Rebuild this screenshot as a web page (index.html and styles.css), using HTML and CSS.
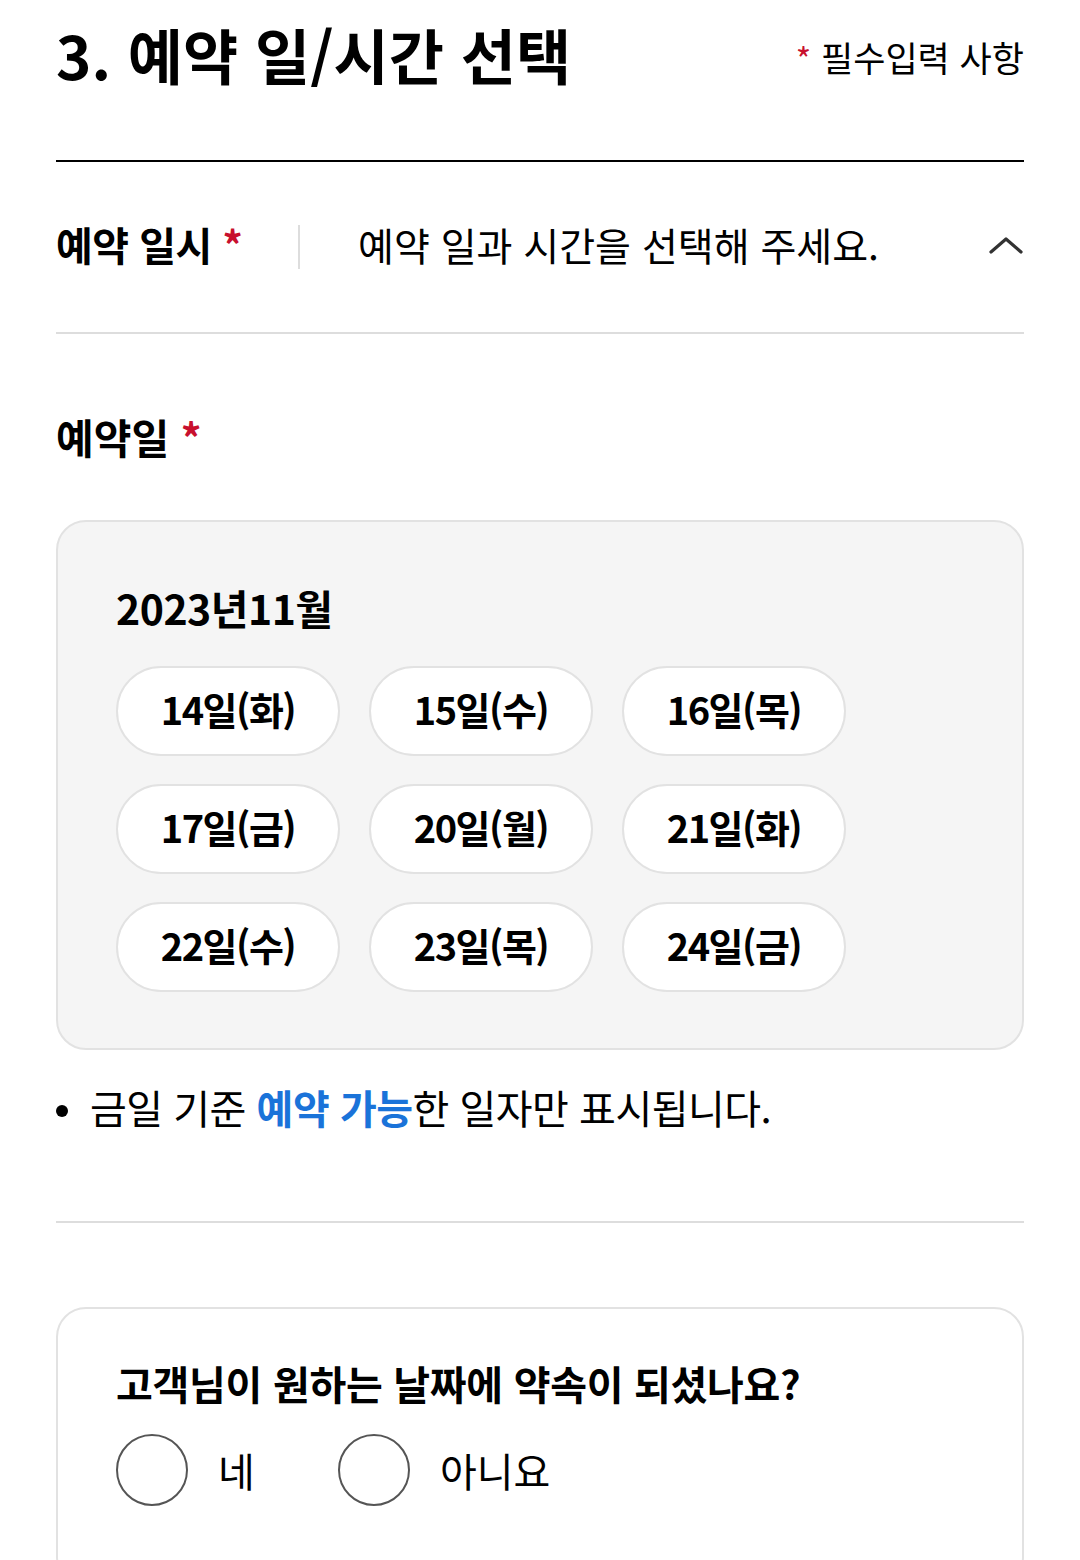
FILE: index.html
```html
<!DOCTYPE html>
<html lang="ko">

<head>
    <meta charset="UTF-8">
    <meta name="viewport" content="width=device-width, initial-scale=1.0">
    <title>예약 일/시간 선택</title>
    <link rel="stylesheet" href="styles.css">
</head>

<body>
    <div class="wrap">
        <div class="head">
            <h2 class="title">3. 예약 일/시간 선택</h2>
            <p class="must"><span class="star">*</span> 필수입력 사항</p>
        </div>

        <div class="pick">
            <div class="pick_label">예약 일시 <span class="star">*</span></div>
            <div class="pick_line"></div>
            <div class="pick_text">예약 일과 시간을 선택해 주세요.</div>
            <svg class="arrow" width="36" height="20" viewBox="0 0 36 20">
                <path d="M3 17 L18 4 L33 17" fill="none" stroke="#333" stroke-width="3.2" stroke-linecap="round" stroke-linejoin="round" />
            </svg>
        </div>

        <div class="sub_tit">예약일 <span class="star">*</span></div>

        <div class="cal">
            <div class="month">2023년11월</div>
            <div class="days">
                <button class="day">14일(화)</button>
                <button class="day">15일(수)</button>
                <button class="day">16일(목)</button>
                <button class="day">17일(금)</button>
                <button class="day">20일(월)</button>
                <button class="day">21일(화)</button>
                <button class="day">22일(수)</button>
                <button class="day">23일(목)</button>
                <button class="day">24일(금)</button>
            </div>
        </div>

        <ul class="note">
            <li>금일 기준 <b>예약 가능</b>한 일자만 표시됩니다.</li>
        </ul>

        <div class="ask">
            <p class="ask_tit">고객님이 원하는 날짜에 약속이 되셨나요?</p>
            <div class="radios">
                <label class="radio"><span class="circle"></span>네</label>
                <label class="radio"><span class="circle"></span>아니요</label>
            </div>
        </div>
    </div>
</body>

</html>
```

FILE: styles.css
```css
* {
    margin: 0;
    padding: 0;
    box-sizing: border-box;
}

body {
    background-color: #fff;
    color: #000;
    font-family: "Noto Sans CJK KR", "Noto Sans", sans-serif;
}

.wrap {
    padding: 0 56px;
}

.star {
    color: #c8102e;
}

/* 상단 제목 */
.head {
    display: flex;
    justify-content: space-between;
    align-items: center;
    height: 162px;
    padding-bottom: 52px;
    border-bottom: 2px solid #000;
}

.title {
    font-size: 60px;
    font-weight: 700;
    line-height: 1;
    letter-spacing: 0;
}

.must {
    font-size: 35px;
    line-height: 1;
    margin-top: 6px;
}

.must .star {
    font-size: 33px;
}

/* 예약 일시 */
.pick {
    display: flex;
    align-items: center;
    height: 172px;
    border-bottom: 2px solid #ddd;
}

.pick_label {
    width: 242px;
    margin-top: -6px;
    font-size: 40px;
    font-weight: 700;
    letter-spacing: -0.5px;
    line-height: 48px;
}

.pick_line {
    width: 2px;
    height: 44px;
    background-color: #ddd;
}

.pick_text {
    flex: 1;
    margin-top: -6px;
    margin-left: 58px;
    font-size: 39px;
    line-height: 48px;
}

.arrow {
    display: block;
    margin-top: -4px;
}

/* 예약일 */
.sub_tit {
    margin-top: 78px;
    margin-bottom: 60px;
    font-size: 41px;
    font-weight: 700;
    line-height: 48px;
}

.cal {
    padding: 61px 58px 56px;
    background-color: #f5f5f5;
    border: 2px solid #e2e2e2;
    border-radius: 30px;
}

.month {
    font-size: 41px;
    font-weight: 700;
    letter-spacing: -0.5px;
    line-height: 48px;
}

.days {
    display: grid;
    grid-template-columns: repeat(3, 224px);
    column-gap: 29px;
    row-gap: 28px;
    margin-top: 35px;
}

.day {
    height: 90px;
    padding-bottom: 5px;
    background-color: #fff;
    border: 2px solid #e2e2e2;
    border-radius: 45px;
    color: #000;
    font-family: inherit;
    font-size: 38px;
    font-weight: 700;
    letter-spacing: -1.5px;
}

/* 안내 */
.note {
    list-style: none;
    margin-top: 33px;
    padding-bottom: 90px;
    border-bottom: 2px solid #ddd;
}

.note li {
    position: relative;
    padding-left: 34px;
    font-size: 40px;
    letter-spacing: -0.5px;
    line-height: 48px;
}

.note li::before {
    content: "";
    position: absolute;
    left: 0;
    top: 22px;
    width: 12px;
    height: 12px;
    border-radius: 50%;
    background-color: #000;
}

.note b {
    color: #1a73d9;
    font-weight: 700;
}

/* 질문 */
.ask {
    margin-top: 84px;
    padding: 50px 58px 80px;
    border: 2px solid #e2e2e2;
    border-radius: 30px;
}

.ask_tit {
    font-size: 40px;
    font-weight: 700;
    letter-spacing: -0.3px;
    line-height: 48px;
}

.radios {
    display: flex;
    margin-top: 27px;
}

.radio {
    display: flex;
    align-items: center;
    min-width: 222px;
    padding-bottom: 0;
    font-size: 40px;
}

.circle {
    width: 72px;
    height: 72px;
    margin-right: 30px;
    border: 2px solid #555;
    border-radius: 50%;
}
```
